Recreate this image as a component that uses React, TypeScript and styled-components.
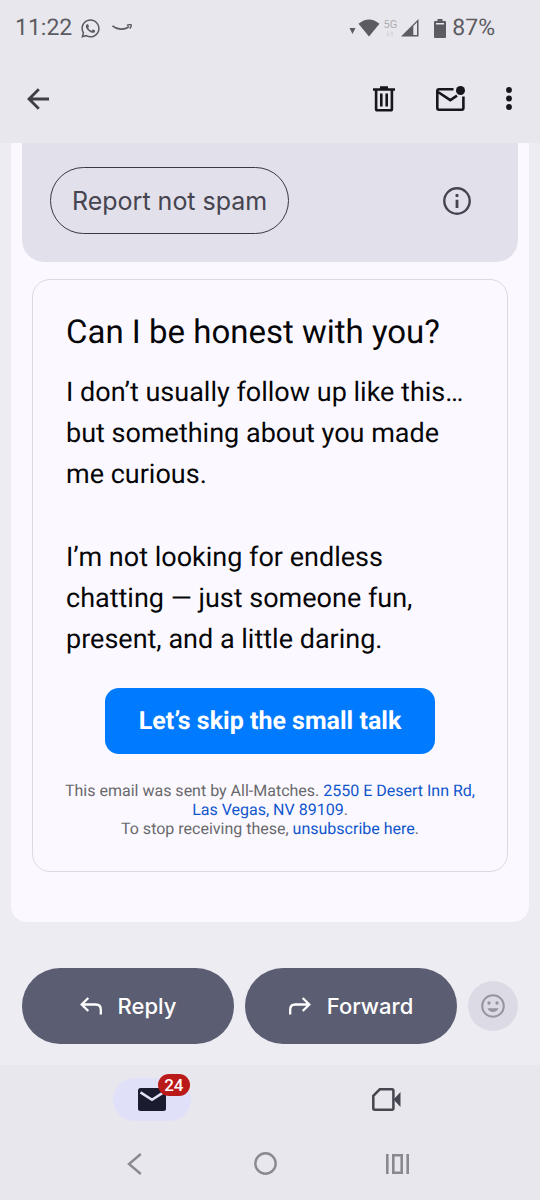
import React from "react";
import styled, { createGlobalStyle } from "styled-components";
import { FaWhatsapp } from "react-icons/fa";

const ui = '"Inter", "Roboto", sans-serif';
const roboto = '"Roboto", "Liberation Sans", sans-serif';

const GlobalStyle = createGlobalStyle`
  *, *::before, *::after { box-sizing: border-box; }
  body { margin: 0; background: #edecf3; font-family: ${roboto}; text-rendering: geometricPrecision; }
  button { font: inherit; border: 0; padding: 0; background: none; color: inherit; cursor: pointer; }
  h1, p { margin: 0; }
  svg { display: block; flex: none; }
`;

const Screen = styled.div`
  min-height: 100vh;
  display: flex;
  flex-direction: column;
`;

const StatusBar = styled.div`
  display: flex;
  align-items: center;
  justify-content: space-between;
  height: 56px;
  padding: 0 45px 0 15px;
  background: #e9e7ee;
  color: #5c5b61;
  font-size: 23px;
  line-height: 28px;
`;

const StatusGroup = styled.div<{ $gap: number }>`
  display: flex;
  align-items: center;
  gap: ${(p) => p.$gap}px;
`;

const NetworkLabel = styled.span`
  display: flex;
  flex-direction: column;
  align-items: center;
  color: #b0aeb5;
  font-size: 11px;
  line-height: 12px;
`;

const AppBar = styled.header`
  display: flex;
  align-items: center;
  justify-content: space-between;
  height: 87px;
  padding: 0 28px 2px 27px;
  background: #e9e7ee;
  color: #17161c;
`;

const Actions = styled.div`
  display: flex;
  align-items: center;
  gap: 41px;
`;

const IconButton = styled.button`
  display: flex;
  align-items: center;
  justify-content: center;
`;

const Sheet = styled.main`
  margin: 0 11px;
  padding-bottom: 50px;
  border-radius: 0 0 16px 16px;
  background: #fbf9ff;
`;

const SpamBanner = styled.section`
  display: flex;
  align-items: center;
  justify-content: space-between;
  margin: 0 11px;
  padding: 24px 47px 28px 28px;
  border-radius: 0 0 22px 22px;
  background: #e2e1eb;
  color: #45444f;
`;

const OutlineButton = styled.button`
  height: 67px;
  padding: 0 21px;
  border: 1px solid #3a3943;
  border-radius: 34px;
  font-family: ${ui};
  font-size: 25px;
  line-height: 32px;
`;

const MessageCard = styled.article`
  margin: 17px 21px 0;
  padding: 31px 25px 33px;
  border: 1px solid #dcdae1;
  border-radius: 18px;
  color: #060608;
`;

const Title = styled.h1`
  padding: 0 8px;
  font-size: 33px;
  font-weight: 400;
  line-height: 44px;
`;

const Body = styled.div`
  display: grid;
  gap: 42px;
  margin-top: 17px;
  padding: 0 8px;
  font-size: 27px;
  line-height: 41px;
`;

const CallToAction = styled.a`
  display: block;
  width: fit-content;
  margin: 28px auto 0;
  padding: 18px 34px 16px;
  border-radius: 14px;
  background: #007bff;
  color: #fff;
  font-size: 25px;
  font-weight: 700;
  line-height: 32px;
  text-decoration: none;
`;

const Legal = styled.p`
  margin-top: 27px;
  color: #69686c;
  font-size: 16px;
  line-height: 19px;
  text-align: center;
`;

const TextLink = styled.a`
  color: #1155cc;
  text-decoration: none;
`;

const ReplyRow = styled.div`
  display: flex;
  align-items: center;
  gap: 11px;
  margin-top: auto;
  padding: 46px 22px 21px;
`;

const ReplyButton = styled.button`
  display: flex;
  flex: 1;
  align-items: center;
  justify-content: center;
  gap: 16px;
  height: 76px;
  border-radius: 38px;
  background: #5b5d72;
  color: #fff;
  font-family: ${ui};
  font-size: 22px;
  font-weight: 500;
  line-height: 32px;
`;

const EmojiButton = styled(IconButton)`
  width: 50px;
  height: 50px;
  border-radius: 50%;
  background: #dcdbe5;
  color: #94959f;
`;

const Tabs = styled.nav`
  display: grid;
  grid-template-columns: 1fr 1fr;
  justify-items: center;
  padding: 13px 36px 0 34px;
  background: #e9e7ee;
`;

const Tab = styled.button<{ $active?: boolean }>`
  position: relative;
  display: flex;
  align-items: center;
  justify-content: center;
  width: 78px;
  height: 43px;
  border-radius: 22px;
  background: ${(p) => (p.$active ? "#e0e0f9" : "transparent")};
`;

const Badge = styled.span`
  position: absolute;
  top: -4px;
  right: 1px;
  padding: 0 6px;
  border-radius: 11px;
  background: #ba1a1a;
  color: #fff;
  font-size: 17px;
  font-weight: 500;
  line-height: 22px;
`;

const SystemNav = styled.nav`
  display: grid;
  grid-template-columns: repeat(3, 1fr);
  justify-items: center;
  align-items: center;
  height: 79px;
  padding: 6px 77px 0 69px;
  background: #e9e7ee;
`;

const SmileArrow = () => (
  <svg width="20" height="8" viewBox="0 0 20 8" fill="none" stroke="currentColor">
    <path d="M.5 1.800C5 6 12 6.200 17 2.800" strokeWidth="1.700" />
    <path d="M14.800 1.400C17 .6 19 .5 19.200 1s-.4 2.300-1.300 3.600" strokeWidth="1.400" />
  </svg>
);

const SignalIcons = () => (
  <svg width="31" height="18" viewBox="0 0 31 18" fill="currentColor">
    <path d="M.5 9h6l-3 6z" />
    <path d="M9.500 4.800Q20-4 30.500 4.800L20 17.500z" />
  </svg>
);

const DataArrows = () => (
  <svg width="8" height="6" viewBox="0 0 8 6" fill="none" stroke="#d3d1d8">
    <path d="M2 0v5M.500 3.500 2 5.200l1.500-1.700M6 6V1M4.500 2.500 6 .8l1.500 1.700" />
  </svg>
);

const CellSignal = () => (
  <svg width="18" height="18" viewBox="0 0 18 18" fill="currentColor">
    <path fillRule="evenodd" d="M0 17.500 17.500 0v17.500zM12.300 7v9h3.700V3.300z" />
  </svg>
);

const Battery = () => (
  <svg width="12" height="19" viewBox="0 0 12 19" fill="currentColor">
    <path fillRule="evenodd" d="M3.500 0h5v2H11q1 0 1 1v15q0 1-1 1H1q-1 0-1-1V3q0-1 1-1h2.500zM2 4v1.500h8V4z" />
  </svg>
);

const BackIcon = () => (
  <svg width="23" height="22" viewBox="0 0 23 22" fill="none" stroke="#3f3e45" strokeWidth="2.800">
    <path d="M22 11H2M11.800 1.200 2 11l9.800 9.800" />
  </svg>
);

const TrashIcon = () => (
  <svg width="22" height="26" viewBox="0 0 22 26" fill="none" stroke="currentColor" strokeWidth="2.600">
    <path d="M0 3.500h22M7 1.500h8" />
    <path d="M3.100 3.500V23q0 1.300 1.300 1.300h13.200q1.300 0 1.300-1.300V3.500M8.300 7.500v13M13.700 7.500v13" />
  </svg>
);

const UnreadMailIcon = () => (
  <svg width="29" height="26" viewBox="0 0 29 26" fill="none" stroke="currentColor" strokeWidth="2.600">
    <path d="M17.500 3.300H3q-1.700 0-1.700 1.700v17q0 1.700 1.700 1.700h22.700q1.700 0 1.700-1.700V10.500" />
    <path d="m2 6 12.300 8.200 6.700-4.500" />
    <circle cx="24.500" cy="4.500" r="4.500" fill="currentColor" stroke="none" />
  </svg>
);

const MoreIcon = () => (
  <svg width="6" height="23" viewBox="0 0 6 23" fill="currentColor">
    <circle cx="3" cy="3" r="2.900" />
    <circle cx="3" cy="11.500" r="2.900" />
    <circle cx="3" cy="20" r="2.900" />
  </svg>
);

const InfoIcon = () => (
  <svg width="28" height="28" viewBox="0 0 28 28" fill="none" stroke="currentColor">
    <circle cx="14" cy="14" r="12.700" strokeWidth="2.400" />
    <path d="M14 12.700V21M14 7v3" strokeWidth="2.800" />
  </svg>
);

const TurnArrow = ({ flip }: { flip?: boolean }) => (
  <svg width="22" height="18" viewBox="0 0 22 18" fill="none" stroke="currentColor" strokeWidth="2.300">
    <path
      d={
        flip
          ? "M1.200 17.500V12.500q0-5 5-5H20M13.700 1l6.600 6.500-6.600 6.500"
          : "M20.800 17.500V12.500q0-5-5-5H2M8.300 1 1.700 7.500l6.600 6.500"
      }
    />
  </svg>
);

const SmileyIcon = () => (
  <svg width="24" height="24" viewBox="0 0 24 24" fill="currentColor">
    <circle cx="12" cy="12" r="10.800" fill="none" stroke="currentColor" strokeWidth="2" />
    <circle cx="8" cy="9" r="1.700" />
    <circle cx="16" cy="9" r="1.700" />
    <path d="M6.500 14.200h11q-1.700 3.800-5.500 3.800t-5.500-3.800z" />
  </svg>
);

const MailIcon = () => (
  <svg width="28" height="23" viewBox="0 0 28 23">
    <rect width="28" height="23" rx="2.500" fill="#1a1b2e" />
    <path d="M2.500 4.300 14 11.800l11.500-7.500" fill="none" stroke="#e0e0f9" strokeWidth="2.600" />
  </svg>
);

const MeetIcon = () => (
  <svg width="29" height="23" viewBox="0 0 29 23" fill="none" stroke="#45464f" strokeWidth="2.500">
    <path d="M7.800 1.300H20q1.400 0 1.400 1.400v17.600q0 1.400-1.400 1.400H2.700q-1.400 0-1.400-1.400V7.800z" />
    <path d="M21.500 11.500 28.500 4v15z" fill="#45464f" stroke="none" />
  </svg>
);

const SystemBack = () => (
  <svg width="15" height="22" viewBox="0 0 15 22" fill="none" stroke="#8b8990" strokeWidth="2.400">
    <path d="M13.800 1 2 11l11.800 10" />
  </svg>
);

const SystemHome = () => (
  <svg width="23" height="23" viewBox="0 0 23 23" fill="none" stroke="#8b8990" strokeWidth="2.400">
    <circle cx="11.500" cy="11.500" r="10.200" />
  </svg>
);

const SystemRecents = () => (
  <svg width="23" height="20" viewBox="0 0 23 20" fill="none" stroke="#8b8990" strokeWidth="2.600">
    <path d="M1.300 0v20M21.700 0v20M7.300 1.300h8.400v17.400H7.300z" />
  </svg>
);

export default function App() {
  return (
    <>
      <GlobalStyle />
      <Screen>
        <StatusBar>
          <StatusGroup $gap={8}>
            <span>11:22</span>
            <StatusGroup $gap={11}>
              <FaWhatsapp size={21} />
              <SmileArrow />
            </StatusGroup>
          </StatusGroup>
          <StatusGroup $gap={15}>
            <StatusGroup $gap={4}>
              <SignalIcons />
              <NetworkLabel>
                5G
                <DataArrows />
              </NetworkLabel>
              <CellSignal />
            </StatusGroup>
            <StatusGroup $gap={6}>
              <Battery />
              <span>87%</span>
            </StatusGroup>
          </StatusGroup>
        </StatusBar>

        <AppBar>
          <IconButton aria-label="Back"><BackIcon /></IconButton>
          <Actions>
            <IconButton aria-label="Delete"><TrashIcon /></IconButton>
            <IconButton aria-label="Mark as unread"><UnreadMailIcon /></IconButton>
            <IconButton aria-label="More options"><MoreIcon /></IconButton>
          </Actions>
        </AppBar>

        <Sheet>
          <SpamBanner>
            <OutlineButton>Report not spam</OutlineButton>
            <IconButton aria-label="Why is this spam?"><InfoIcon /></IconButton>
          </SpamBanner>
          <MessageCard>
            <Title>Can I be honest with you?</Title>
            <Body>
              <p>I don’t usually follow up like this… but something about you made me curious.</p>
              <p>I’m not looking for endless chatting — just someone fun, present, and a little daring.</p>
            </Body>
            <CallToAction href="#talk">Let’s skip the small talk</CallToAction>
            <Legal>
              This email was sent by All-Matches.{" "}
              <TextLink href="#address">2550 E Desert Inn Rd, Las Vegas, NV 89109</TextLink>.
              <br />
              To stop receiving these, <TextLink href="#unsubscribe">unsubscribe here</TextLink>.
            </Legal>
          </MessageCard>
        </Sheet>

        <ReplyRow>
          <ReplyButton><TurnArrow />Reply</ReplyButton>
          <ReplyButton><TurnArrow flip />Forward</ReplyButton>
          <EmojiButton aria-label="Add reaction"><SmileyIcon /></EmojiButton>
        </ReplyRow>

        <Tabs aria-label="Sections">
          <Tab $active aria-label="Mail, 24 unread"><MailIcon /><Badge>24</Badge></Tab>
          <Tab aria-label="Meet"><MeetIcon /></Tab>
        </Tabs>
        <SystemNav aria-label="System">
          <IconButton aria-label="System back"><SystemBack /></IconButton>
          <IconButton aria-label="Home"><SystemHome /></IconButton>
          <IconButton aria-label="Recent apps"><SystemRecents /></IconButton>
        </SystemNav>
      </Screen>
    </>
  );
}
